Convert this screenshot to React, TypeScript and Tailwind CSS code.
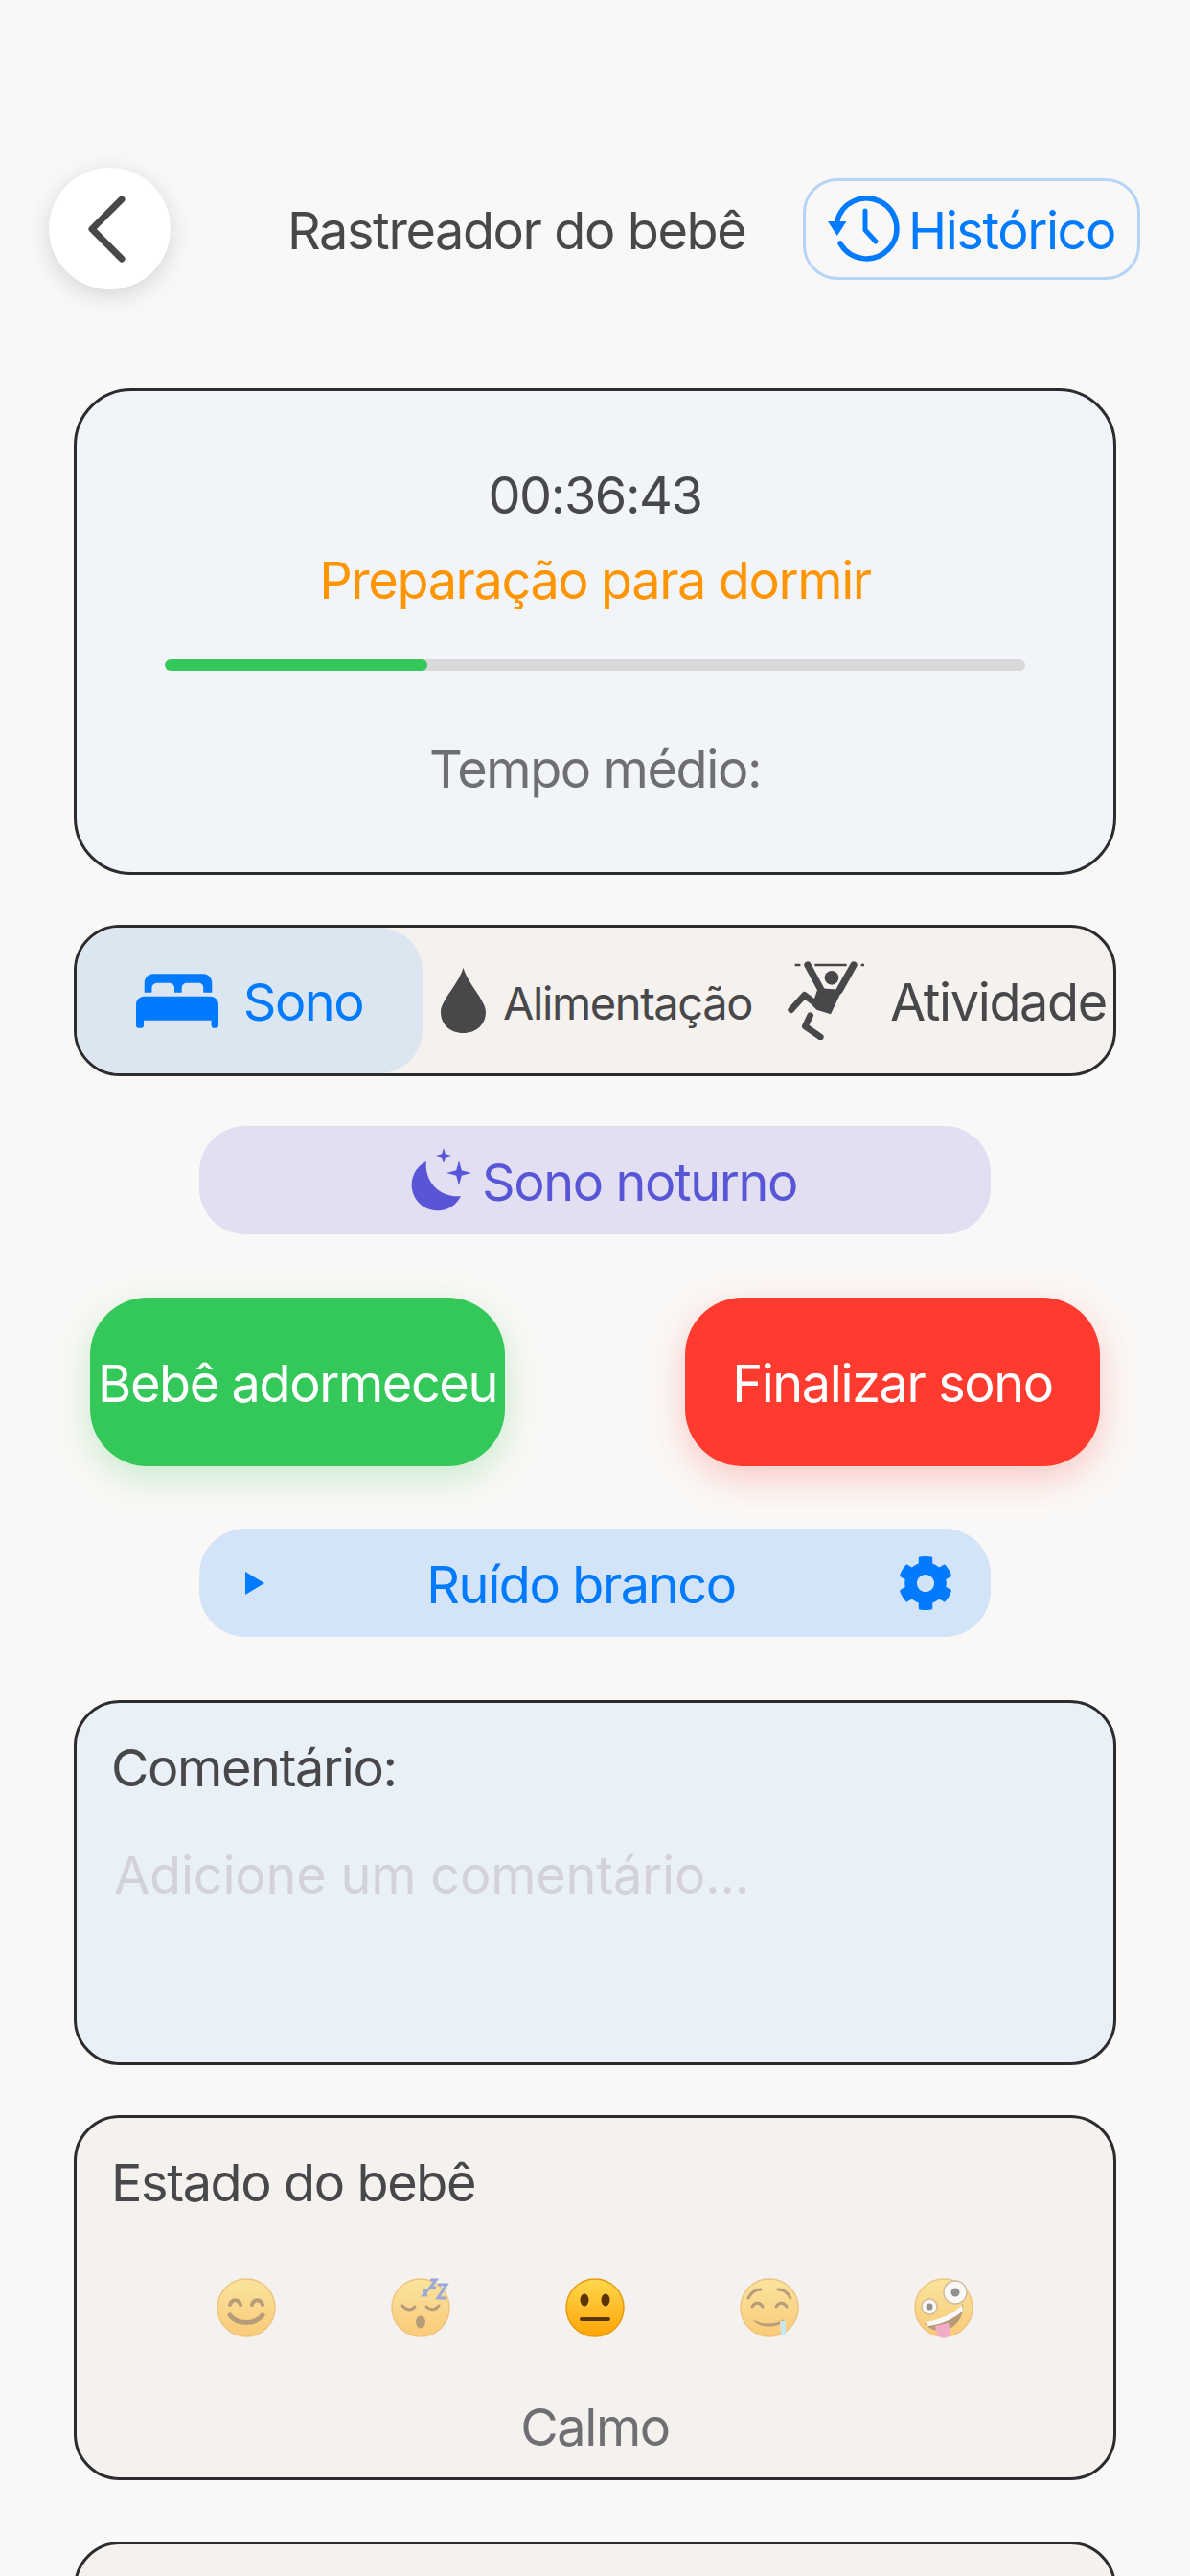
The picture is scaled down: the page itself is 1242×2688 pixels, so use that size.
import { FaCog } from 'react-icons/fa';

const font = "font-['Inter','Liberation_Sans',sans-serif]";

const BackIcon = () => (
  <svg width="42" height="70" viewBox="0 0 42 70" fill="none" className="mr-[8px]">
    <path d="M37 4L6 35l31 31" stroke="#48484a" strokeWidth="7" strokeLinecap="round" strokeLinejoin="round" />
  </svg>
);

const HistoryIcon = () => (
  <svg width="76" height="69" viewBox="0 0 76 69" fill="none" className="shrink-0">
    <path d="M9.5 28A31.5 31.5 0 1 1 13 50" stroke="#007aff" strokeWidth="5.5" strokeLinecap="round" />
    <path d="M0 27h19.5l-9.7 15z" fill="#007aff" />
    <path d="M39 16v20l11 12" stroke="#007aff" strokeWidth="5" strokeLinecap="round" strokeLinejoin="round" />
  </svg>
);

const BedIcon = () => (
  <svg width="86" height="57" viewBox="36 47 256 168" fill="#007aff" className="shrink-0">
    <path
      fillRule="evenodd"
      d="M90 47h154c16 0 28 12 28 28v30h-27V90c0-9-6-15-15-15h-35c-9 0-17 6-17 15v15h-23V90c0-9-8-15-17-15h-35c-9 0-18 6-18 15v15H62V75c0-16 12-28 28-28z"
    />
    <path d="M61 117h206c14 0 25 11 25 25v66c0 4-3 7-7 7h-8c-4 0-7-3-7-7v-17H60v17c0 4-3 7-7 7h-10c-4 0-7-3-7-7v-66c0-14 11-25 25-25z" />
  </svg>
);

const DropIcon = () => (
  <svg width="47" height="68" viewBox="0 0 47 68" fill="#48484a" className="shrink-0">
    <path d="M23.5 0C29 18 47 34 47 46c0 13-10 22-23.5 22S0 59 0 46C0 34 18 18 23.5 0z" />
  </svg>
);

const LiftIcon = () => (
  <svg width="82" height="82" viewBox="62 38 246 246" fill="none" className="shrink-0">
    <path d="M88 50h17M150 50h100M295 50h10" stroke="#48484a" strokeWidth="8" />
    <path d="M128 50l42 78M272 50l-45 80" stroke="#48484a" strokeWidth="22" strokeLinecap="round" />
    <circle cx="203" cy="90" r="22" fill="#48484a" />
    <path d="M160 122l76 6-36 76-44-14-14-14z" fill="#48484a" />
    <path d="M160 176l-42-32-42 46" stroke="#48484a" strokeWidth="20" strokeLinecap="round" strokeLinejoin="round" />
    <path d="M136 208l-16 34 48 33" stroke="#48484a" strokeWidth="20" strokeLinecap="round" strokeLinejoin="round" />
  </svg>
);

const MoonIcon = () => (
  <svg width="69" height="67" viewBox="0 0 69 67" fill="#5856d6" className="shrink-0">
    <path d="M21 14A27 27 0 1 0 57 50 32 32 0 0 1 21 14z" />
    <path d="M39 0l1.8 6.2L47 8l-6.2 1.8L39 16l-1.8-6.2L31 8l6.2-1.800z" />
    <path d="M55 13l2.800 10.200L68 26l-10.200 2.800L55 39l-2.800-10.200L42 26l10.200-2.800z" />
  </svg>
);

// no colour emoji font here, so the faces are drawn
const Face = ({ kind, faded }: { kind: number; faded: boolean }) => (
  <svg width="64" height="64" viewBox="0 0 64 64" className={faded ? 'opacity-50' : ''}>
    <defs>
      <linearGradient id={`face${kind}`} x1="0" y1="0" x2="0" y2="1">
        <stop offset="0" stopColor="#ffd84d" />
        <stop offset="1" stopColor="#ffa408" />
      </linearGradient>
    </defs>
    <circle cx="32" cy="32" r="30" fill={`url(#face${kind})`} stroke="#e89a10" strokeWidth="1.5" />
    {kind === 0 && (
      <g fill="none" stroke="#7a4a08" strokeWidth="4" strokeLinecap="round">
        <path d="M15 29a6 8 0 0 1 11 0M38 29a6 8 0 0 1 11 0" />
        <path d="M15 40c8 10 26 10 34 0" strokeWidth="5" />
      </g>
    )}
    {kind === 1 && (
      <g>
        <path d="M13 30c4 5 10 5 13 1M38 31c4 4 9 4 13-1" fill="none" stroke="#7a4a08" strokeWidth="3" strokeLinecap="round" />
        <ellipse cx="32" cy="47" rx="5" ry="6.5" fill="#7a4a08" />
        <path d="M35 14h4l-4 5h4M42 3h6l-6 8h6M50 8h9l-9 14h9" fill="none" stroke="#3f63c8" strokeWidth="3" />
      </g>
    )}
    {kind === 2 && (
      <g fill="#5b3405">
        <ellipse cx="21" cy="24" rx="4.500" ry="6.500" />
        <ellipse cx="43" cy="24" rx="4.500" ry="6.500" />
        <rect x="16" y="42" width="32" height="4" rx="2" />
      </g>
    )}
    {kind === 3 && (
      <g>
        <g fill="none" stroke="#7a4a08" strokeWidth="3" strokeLinecap="round">
          <path d="M10 22c3-6 8-9 13-9M41 13c5 0 10 3 13 9" />
          <path d="M14 31c3-5 8-5 11 0M39 31c3-5 8-5 11 0" />
        </g>
        <path d="M15 44c8 6 24 6 32 0-2 10-28 10-32 0z" fill="#7a4a08" />
        <path d="M43 46h6v13c0 3-5 3-5 0z" fill="#9fdcf5" />
      </g>
    )}
    {kind === 4 && (
      <g>
        <circle cx="44" cy="16" r="12" fill="#fff" stroke="#a98a4a" strokeWidth="1.500" />
        <circle cx="44" cy="16" r="4.500" fill="#333" />
        <circle cx="17" cy="31" r="8" fill="#fff" stroke="#a98a4a" strokeWidth="1.500" />
        <circle cx="17" cy="31" r="3.500" fill="#333" />
        <path d="M12 48c14-2 28-8 40-20 2 16-12 30-26 28-7-1-11-4-14-8z" fill="#7a4a08" />
        <path d="M13 47c14-2 28-8 38-18l1 6C42 45 26 50 15 51z" fill="#fff" />
        <path d="M23 51l14-3 2 11c0 6-12 6-14 1z" fill="#f06aa0" />
      </g>
    )}
  </svg>
);

const App = () => {
  return (
    <div className={`${font} w-[1242px] h-[2688px] overflow-hidden bg-[#faf8f6] text-[#48484a] text-[54px] leading-none tracking-[-1.4px] whitespace-nowrap`}>
      <header className="flex items-center pt-[175px] pl-[51px] pr-[52px]">
        <button className="w-[127px] h-[127px] shrink-0 rounded-full bg-white shadow-[0_6px_24px_rgba(0,0,0,0.14)] flex items-center justify-center">
          <BackIcon />
        </button>
        <h1 className="ml-[122px] flex-1 font-normal mt-[4px]">Rastreador do bebê</h1>
        <button className="w-[352px] h-[106px] shrink-0 rounded-[36px] border-[3px] border-[#b5d5f8] flex items-center justify-center gap-[8px] text-[#007aff]">
          <HistoryIcon />
          <span className="mt-[4px]">Histórico</span>
        </button>
      </header>

      <div className="flex flex-col px-[77px] mt-[103px]">
        <section className="h-[508px] rounded-[60px] border-[3px] border-[#2c2c2e] bg-[#f1f5fa] flex flex-col items-center pt-[82px]">
          <div>00:36:43</div>
          <div className="mt-[35px] text-[#ff9500]">Preparação para dormir</div>
          <div className="mt-[55px] w-[898px] h-[12px] rounded-md bg-[#d9d9d9] overflow-hidden">
            <div className="w-[274px] h-full rounded-md bg-[#34c759]" />
          </div>
          <div className="mt-[76px] text-[#6e6e73]">Tempo médio:</div>
        </section>

        <nav className="mt-[52px] h-[158px] rounded-[48px] border-[3px] border-[#2c2c2e] bg-[#f5f1ee] flex items-center">
          <div className="w-[361px] h-full shrink-0 rounded-[45px] bg-[#dce6f0] flex items-center justify-center gap-[26px] text-[#007aff]">
            <BedIcon />
            <span className="mt-[4px]">Sono</span>
          </div>
          <div className="flex items-center ml-[19px] gap-[18px] shrink-0">
            <DropIcon />
            <span className="text-[47px] mt-[4px]">Alimentação</span>
          </div>
          <div className="flex items-center ml-[36px] gap-[26px] shrink-0">
            <LiftIcon />
            <span className="mt-[4px]">Atividade</span>
          </div>
        </nav>

        <div className="mt-[52px] mx-[131px] h-[113px] rounded-[48px] bg-[#e2dff2] flex items-center justify-center gap-[10px] pl-[14px] text-[#5856d6]">
          <MoonIcon />
          <span className="mt-[4px]">Sono noturno</span>
        </div>

        <div className="mt-[66px] mx-[17px] flex justify-between">
          <button className="w-[433px] h-[176px] shrink-0 pt-[3px] rounded-[60px] bg-[#34c759] text-white shadow-[0_12px_36px_rgba(52,199,89,0.25)]">
            Bebê adormeceu
          </button>
          <button className="w-[433px] h-[176px] shrink-0 pt-[3px] rounded-[60px] bg-[#ff3b30] text-white shadow-[0_12px_36px_rgba(255,59,48,0.25)]">
            Finalizar sono
          </button>
        </div>

        <div className="mt-[65px] mx-[131px] h-[113px] rounded-[48px] bg-[#d3e4f8] flex items-center pl-[48px] pr-[39px] text-[#007aff]">
          <svg width="20" height="24" viewBox="0 0 20 24" fill="#007aff"><path d="M0 0l20 12L0 24z" /></svg>
          <span className="flex-1 text-center mt-[4px]">Ruído branco</span>
          <FaCog size={58} />
        </div>

        <section className="mt-[66px] h-[381px] rounded-[48px] border-[3px] border-[#2c2c2e] bg-[#e9f0f8] px-[36px] pt-[41px]">
          <div>Comentário:</div>
          <div className="mt-[58px] text-[#d3d1da] pl-[3px] tracking-[-0.2px]">Adicione um comentário...</div>
        </section>

        <section className="mt-[52px] h-[381px] rounded-[48px] border-[3px] border-[#2c2c2e] bg-[#f5f1ee] px-[36px] pt-[41px]">
          <div>Estado do bebê</div>
          <div className="mt-[71px] flex justify-center gap-[118px]">
            {[0, 1, 2, 3, 4].map((kind) => (
              <Face key={kind} kind={kind} faded={kind !== 2} />
            ))}
          </div>
          <div className="mt-[66px] text-center text-[#6e6e73]">Calmo</div>
        </section>

        <section className="mt-[64px] h-[300px] rounded-[48px] border-[3px] border-[#2c2c2e] bg-[#f5f1ee]" />
      </div>
    </div>
  );
};

export default App;
